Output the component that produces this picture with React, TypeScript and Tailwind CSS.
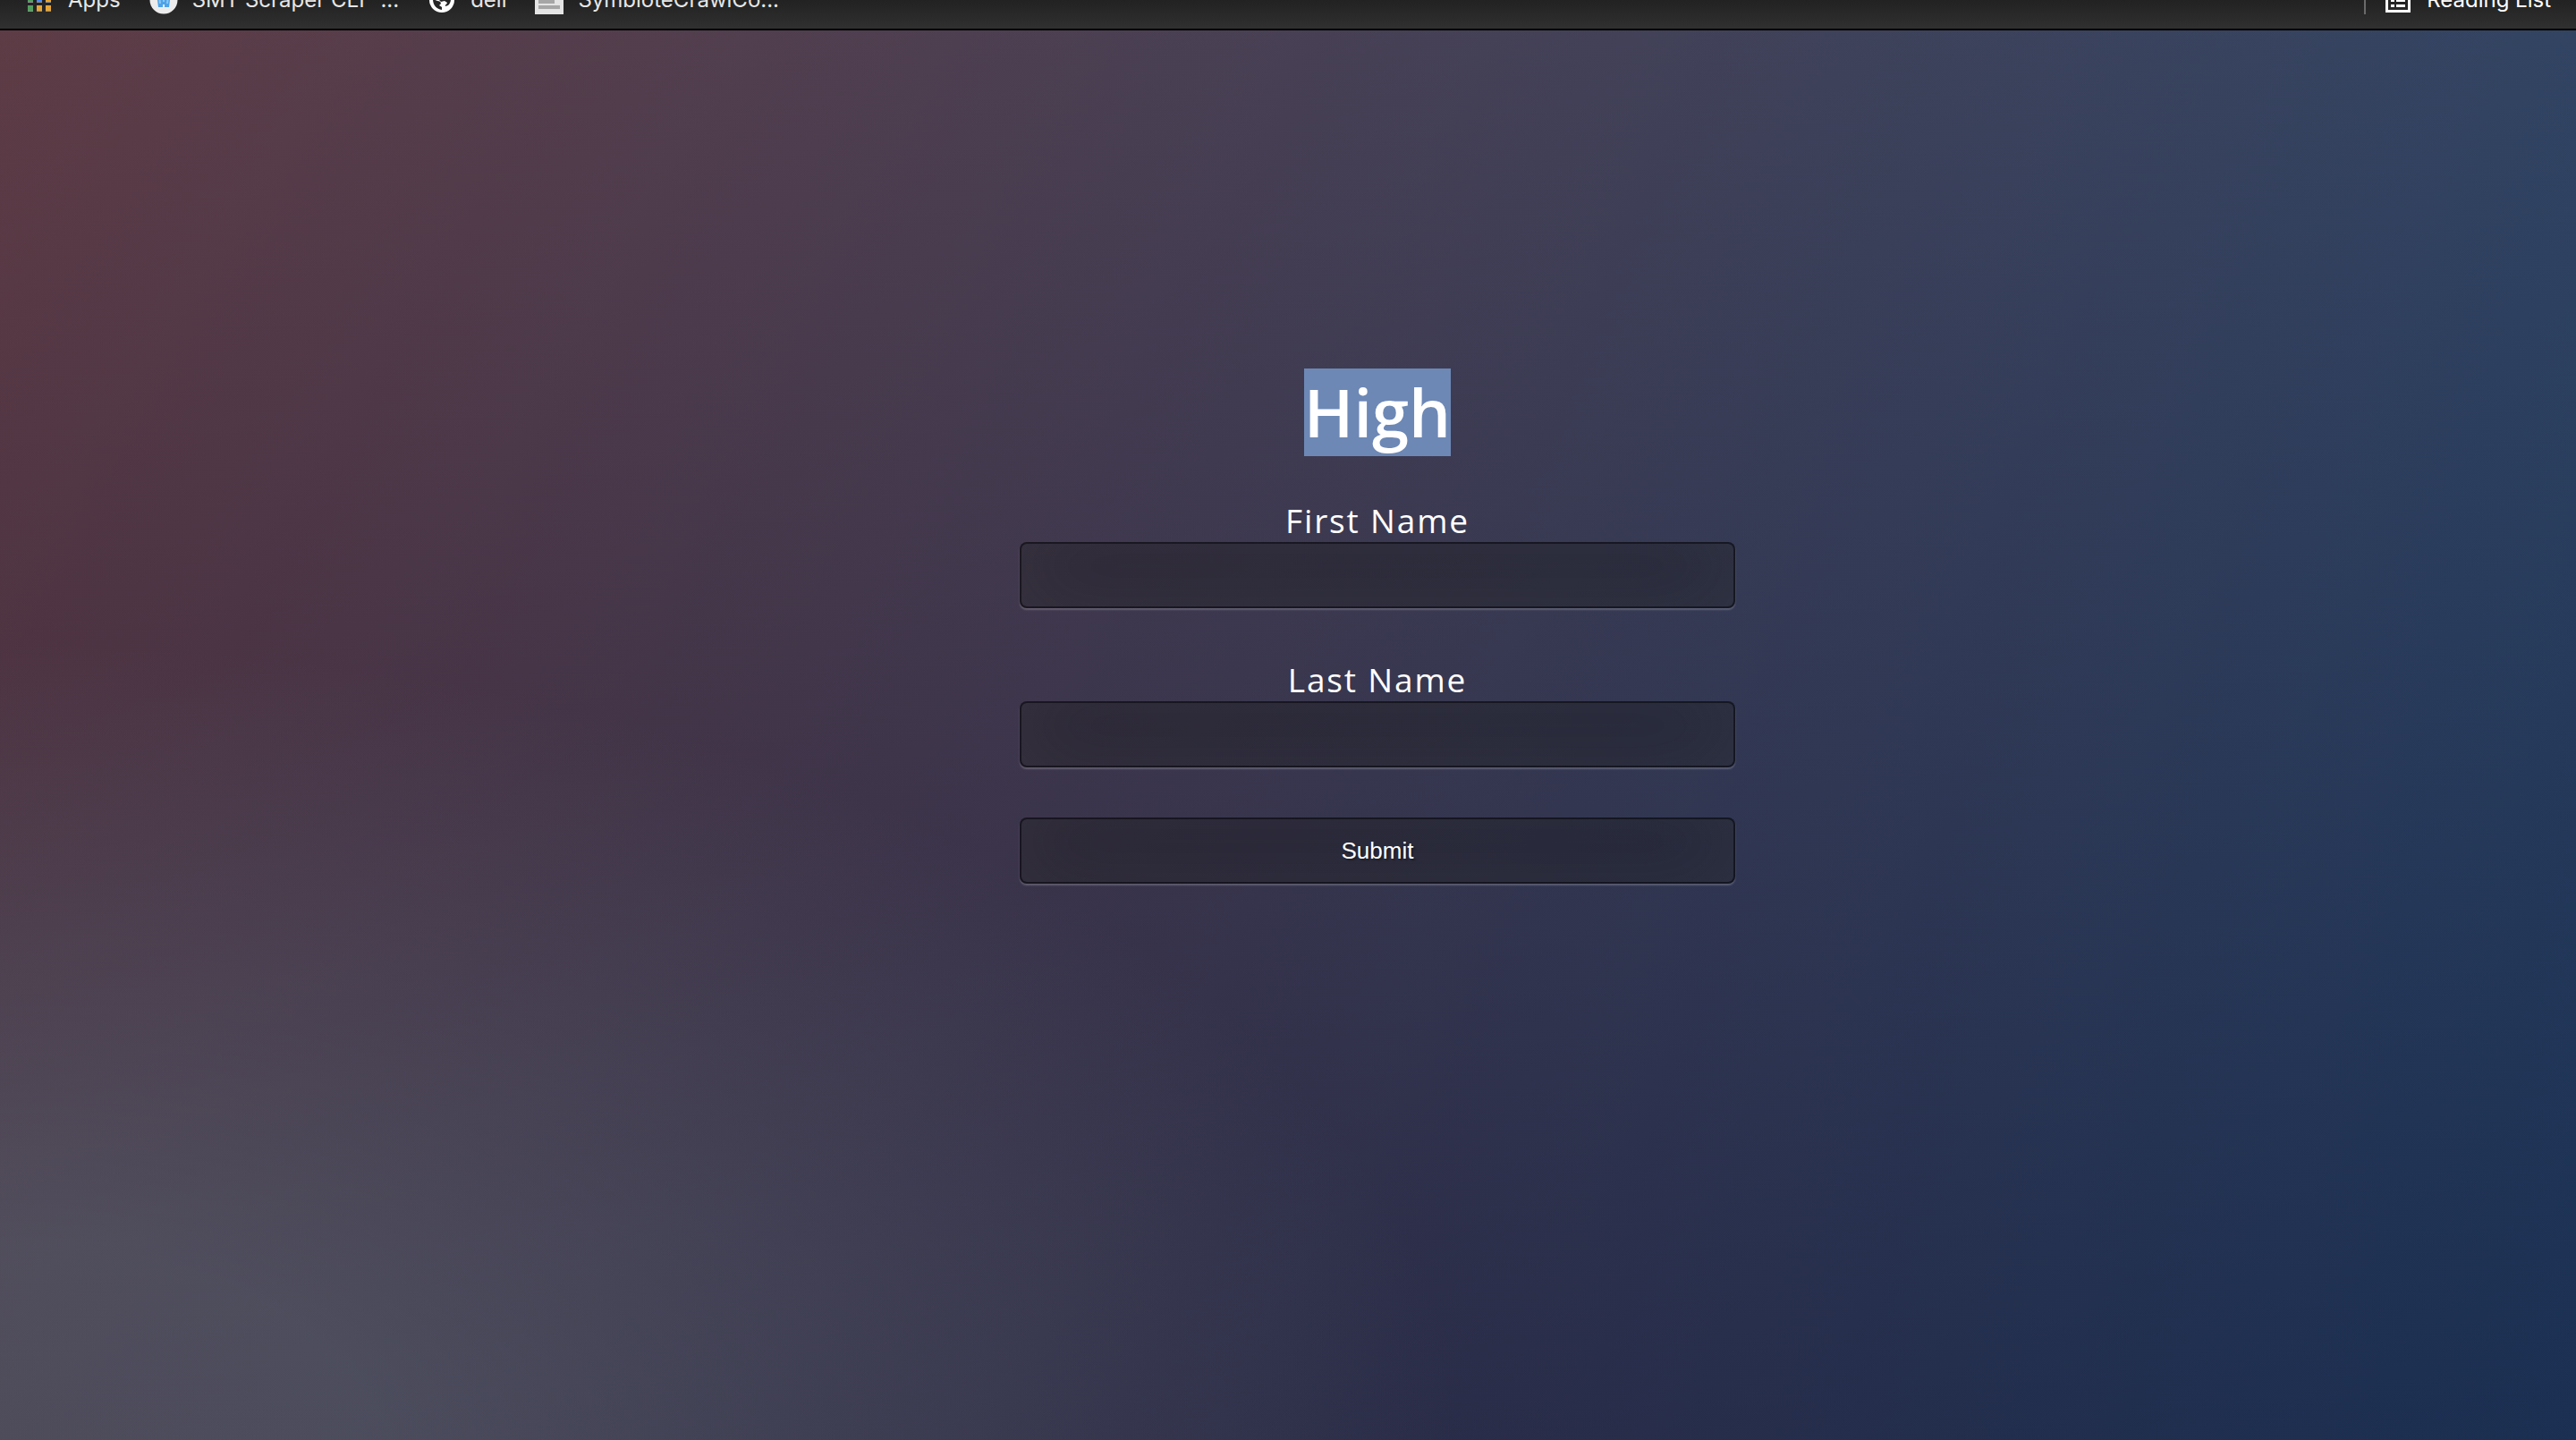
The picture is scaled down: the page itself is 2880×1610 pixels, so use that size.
import type { ReactNode } from "react";

function AppsIcon() {
  const colors = ["#de5246", "#de5246", "#4a8af4", "#529e5f", "#4a8af4", "#e5a536", "#529e5f", "#e5a536", "#e5a536"];
  return (
    <svg width="32" height="32" viewBox="0 0 32 32" aria-hidden="true">
      {colors.map((c, i) => (
        <g key={i}>
          <rect x={3 + (i % 3) * 10} y={2 + Math.floor(i / 3) * 10} width="6" height="7" fill="#8f8f8f" />
          <rect x={3 + (i % 3) * 10} y={2 + Math.floor(i / 3) * 10} width="6" height="6" fill={c} />
        </g>
      ))}
    </svg>
  );
}

function RoundIcon() {
  return (
    <svg width="32" height="32" viewBox="0 0 32 32" aria-hidden="true">
      <circle cx="16" cy="16" r="15.5" fill="#ececec" />
      <path d="M8 8h16l-2 16h-5v-3h-2v3h-5z" fill="#4da3e8" />
      <path d="M11 12l1 8M21 12l-1 8M16 12v6" stroke="#8cc8f5" strokeWidth="2" />
    </svg>
  );
}

function GlobeIcon() {
  return (
    <svg width="32" height="32" viewBox="0 0 32 32" aria-hidden="true">
      <circle cx="16" cy="16" r="14" fill="#fff" />
      <path d="M6 15l5 2c2 0 4 1 4 3l-2 2 3 2v3c-6-1-10-5-10-12zM17 5c6 0 9 5 9 10 0 3-1 5-3 7l-3 1c-1-2 2-2 2-4l-3-2-4 1-3-3 1-3 4-1z" fill="#262626" />
    </svg>
  );
}

function PageIcon() {
  return (
    <svg width="32" height="32" viewBox="0 0 32 32" aria-hidden="true">
      <path d="M0 0h32v32H0z" fill="#e4e4e4" />
      <path d="M4 6h24v4H4zM4 16h18v4H4zM4 22h24v4H4z" fill="#a6a6a6" />
    </svg>
  );
}

function ReadingListIcon() {
  return (
    <svg width="32" height="32" viewBox="0 0 32 32" fill="#fff" aria-hidden="true">
      <path fillRule="evenodd" d="M2 2h28v28H2zM5 5v22h22V5z" />
      <path d="M8 9h4v3H8zM14 9h10v3H14zM8 15h4v3H8zM14 15h10v3H14zM8 21h4v3H8zM14 21h10v3H14z" />
    </svg>
  );
}

function Bookmark({ icon, children }: { icon: ReactNode; children: ReactNode }) {
  return (
    <a href="#" className="flex shrink-0 items-center gap-4 whitespace-nowrap">
      {icon}
      {children}
    </a>
  );
}

const control =
  "block h-[74px] w-full rounded-lg border-2 border-black/40 bg-black/30 px-5 text-[26px] text-white outline-none [text-shadow:2px_2px_2px_rgba(0,0,0,0.3)] shadow-[inset_0_-10px_90px_rgba(100,100,100,0.2),0_2px_2px_rgba(255,255,255,0.2)]";

function Field({ id, label }: { id: string; label: string }) {
  return (
    <div className="mb-14 flex flex-col">
      <label htmlFor={id} className="text-center font-['Open_Sans',sans-serif] text-[37px] leading-[48px] tracking-wider text-white">
        {label}
      </label>
      <input id={id} type="text" className={control} />
    </div>
  );
}

export default function App() {
  return (
    <div className="flex min-h-screen flex-col bg-[#3a3450] font-['Liberation_Sans',sans-serif]">
      <header className="h-[34px] overflow-hidden border-b-2 border-black bg-linear-to-b from-[#222222] to-[#303030]">
        <nav className="-mt-8 flex h-16 items-center gap-8 px-7 font-['Inter',sans-serif] text-[24px] text-[#e6e6e6]">
          <Bookmark icon={<AppsIcon />}>Apps</Bookmark>
          <Bookmark icon={<RoundIcon />}>SMT Scraper CLI -...</Bookmark>
          <Bookmark icon={<GlobeIcon />}>dell</Bookmark>
          <Bookmark icon={<PageIcon />}>SymbioteCrawlCo...</Bookmark>
          <div className="ml-auto flex items-center gap-5 text-white">
            <span className="h-8 w-0.5 bg-[#6a6a6a]" />
            <Bookmark icon={<ReadingListIcon />}>Reading List</Bookmark>
          </div>
        </nav>
      </header>
      <main className="flex grow flex-col items-center bg-[radial-gradient(ellipse_farthest-corner_at_0%_100%,rgba(104,128,138,0.4)_10%,rgba(138,114,76,0)_40%),linear-gradient(to_bottom,rgba(57,173,219,0.25)_0%,rgba(42,60,87,0.4)_100%),linear-gradient(135deg,#6a1614_0%,#10274f_100%)] pt-[378px] pl-[200px]">
        <form className="w-[800px]">
          <h1 className="mb-12 text-center font-['Open_Sans',sans-serif] text-[74px] leading-[98px] font-semibold text-white">
            <span className="inline-block bg-[#6d88b5]">High</span>
          </h1>
          <Field id="first-name" label="First Name" />
          <Field id="last-name" label="Last Name" />
          <button type="button" className={control}>
            Submit
          </button>
        </form>
      </main>
    </div>
  );
}
